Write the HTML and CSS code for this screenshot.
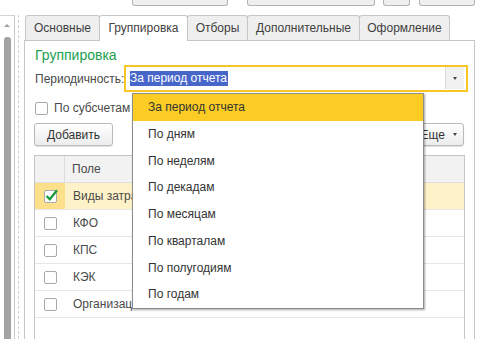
FILE: index.html
```html
<!DOCTYPE html>
<html lang="ru">
<head>
    <meta charset="UTF-8">
    <title>Группировка</title>
    <link rel="stylesheet" href="styles.css">
</head>
<body>
    <div class="sidebar">
        <span class="scroll-up"></span>
        <div class="scroll-thumb"></div>
    </div>
    <div class="splitter"><div class="splitter-line"></div></div>
    <div class="main">
        <div class="toolbar">
            <div class="tb-btn tb-1"></div>
            <div class="tb-btn tb-2"></div>
            <div class="tb-btn tb-3"></div>
            <div class="tb-btn tb-4"></div>
        </div>
        <div class="tabs">
            <div class="tab tab-main">Основные</div>
            <div class="tab tab-group active">Группировка</div>
            <div class="tab tab-filter">Отборы</div>
            <div class="tab tab-extra">Дополнительные</div>
            <div class="tab tab-look">Оформление</div>
        </div>
        <div class="panel">
            <div class="group-title">Группировка</div>
            <div class="field-row">
                <span class="field-label">Периодичность:</span>
                <div class="combo">
                    <div class="combo-text"><span class="selection">За период отчета</span></div>
                    <div class="combo-btn"><span class="arrow"></span></div>
                </div>
            </div>
            <label class="check-row">
                <span class="checkbox"></span>
                <span>По субсчетам</span>
            </label>
            <div class="btn-row">
                <button class="btn">Добавить</button>
                <button class="btn btn-more">Еще <span class="arrow"></span></button>
            </div>
            <div class="table">
                <div class="row head">
                    <div class="cell-check"></div>
                    <div class="cell-field">Поле</div>
                </div>
                <div class="row current">
                    <div class="cell-check">
                        <span class="checkbox">
                            <svg width="15" height="15" viewBox="0 0 15 15"><path d="M2.5 8 L5.8 11.2 L13 2.2" fill="none" stroke="#1c9b3b" stroke-width="2.3"/></svg>
                        </span>
                    </div>
                    <div class="cell-field">Виды затрат</div>
                </div>
                <div class="row">
                    <div class="cell-check"><span class="checkbox"></span></div>
                    <div class="cell-field">КФО</div>
                </div>
                <div class="row">
                    <div class="cell-check"><span class="checkbox"></span></div>
                    <div class="cell-field">КПС</div>
                </div>
                <div class="row">
                    <div class="cell-check"><span class="checkbox"></span></div>
                    <div class="cell-field">КЭК</div>
                </div>
                <div class="row">
                    <div class="cell-check"><span class="checkbox"></span></div>
                    <div class="cell-field">Организация</div>
                </div>
            </div>
        </div>
    </div>
    <!-- open list of the periodicity field -->
    <ul class="popup">
        <li class="hover">За период отчета</li>
        <li>По дням</li>
        <li>По неделям</li>
        <li>По декадам</li>
        <li>По месяцам</li>
        <li>По кварталам</li>
        <li>По полугодиям</li>
        <li>По годам</li>
    </ul>
</body>
</html>
```

FILE: styles.css
```css
* {
    box-sizing: border-box;
}
body {
    margin: 0;
    width: 491px;
    height: 339px;
    overflow: hidden;
    display: flex;
    background: #fff;
    font-family: "Liberation Sans", Arial, sans-serif;
    font-size: 12px;
    color: #4a4a4a;
}
.sidebar {
    width: 15px;
    margin-top: 15px;
    border-top: 1px solid #d4d4d4;
    border-right: 1px solid #c8c8c8;
    display: flex;
    flex-direction: column;
    align-items: center;
}
.scroll-up {
    margin-top: 8px;
    width: 0;
    height: 0;
    border-left: 3px solid transparent;
    border-right: 3px solid transparent;
    border-bottom: 3px solid #a0a0a0;
}
.scroll-thumb {
    flex: 1;
    width: 7px;
    margin-top: 10px;
    background: #a3a3a3;
    border-radius: 3px 3px 0 0;
}
.splitter {
    width: 9px;
    margin-top: 15px;
}
.splitter-line {
    height: 100%;
    margin-left: 3px;
    border-left: 1px dashed #d0d0d0;
}
.main {
    width: 467px;
    display: flex;
    flex-direction: column;
}
.toolbar {
    height: 15px;
    display: flex;
    align-items: flex-start;
    padding-left: 108px;
}
.tb-btn {
    height: 6px;
    border: 1px solid #b4b4b4;
    border-top: none;
    border-radius: 0 0 3px 3px;
    background: #efefef;
}
.tb-1 { width: 96px; }
.tb-2 { width: 128px; margin-left: 19px; }
.tb-3 { width: 27px; margin-left: 8px; }
.tb-4 { width: 56px; margin-left: 9px; }
.tabs {
    display: flex;
    height: 25px;
    padding-left: 1px;
    position: relative;
    z-index: 1;
}
.tab {
    height: 25px;
    line-height: 24px;
    text-align: center;
    border: 1px solid #c6c6c6;
    border-bottom: none;
    border-radius: 3px 3px 0 0;
    background: #efefef;
    margin-right: -1px;
    color: #404040;
}
.tab.active {
    background: #fff;
    height: 26px;
}
.tab-main { width: 75px; }
.tab-group { width: 89px; }
.tab-filter { width: 61px; }
.tab-extra { width: 113px; }
.tab-look { width: 91px; }
.panel {
    flex: 1;
    width: 451px;
    border: 1px solid #c6c6c6;
    border-bottom: none;
    padding: 4px 6px 0 9px;
    display: flex;
    flex-direction: column;
}
.group-title {
    color: #22a050;
    font-size: 14px;
    line-height: 20px;
    padding-left: 1px;
}
.field-row {
    display: flex;
    align-items: center;
    height: 27px;
}
.field-label {
    width: 90px;
    padding-left: 1px;
}
.combo {
    flex: 1;
    height: 27px;
    border: 2px solid #f7c524;
    display: flex;
    align-items: center;
    background: #fff;
}
.combo-text {
    flex: 1;
    padding-left: 4px;
}
.selection {
    background: #4766c9;
    color: #fff;
    line-height: 15px;
    display: inline-block;
    padding: 0 1px 0 0;
}
.combo-btn {
    width: 19px;
    height: 22px;
    margin: 0 2px 1px 0;
    align-self: flex-end;
    background: #f1f1f1;
    border-left: 1px solid #dadada;
    display: flex;
    align-items: center;
    justify-content: center;
}
.arrow {
    display: inline-block;
    width: 0;
    height: 0;
    border-left: 2.5px solid transparent;
    border-right: 2.5px solid transparent;
    border-top: 3px solid #444;
}
.check-row {
    display: flex;
    align-items: center;
    gap: 6px;
    height: 14px;
    margin-top: 9px;
    padding-left: 1px;
}
.checkbox {
    position: relative;
    width: 13px;
    height: 13px;
    border: 1px solid #a9a9a9;
    border-radius: 2px;
    background: #fff;
    display: inline-flex;
    align-items: center;
    justify-content: center;
}
.checkbox svg {
    position: absolute;
    left: -1px;
    top: -3px;
}
.btn-row {
    display: flex;
    justify-content: space-between;
    margin-top: 8px;
    margin-right: 4px;
}
.btn {
    height: 23px;
    padding: 0 12px;
    font-family: inherit;
    font-size: 12px;
    color: #333;
    border: 1px solid #b9b9b9;
    border-radius: 3px;
    background: linear-gradient(#ffffff, #ececec);
    box-shadow: 0 1px 1px rgba(0, 0, 0, 0.12);
}
.btn-more {
    padding: 0 6px 0 10px;
    display: flex;
    align-items: center;
    gap: 8px;
}
.table {
    flex: 1;
    margin-top: 9px;
    margin-right: 3px;
    border: 1px solid #c4c4c4;
    border-bottom: none;
}
.row {
    display: flex;
    height: 27px;
    border-bottom: 1px solid #e6e6e6;
}
.row.head {
    height: 27px;
    background: #f2f2f2;
    border-bottom: 1px solid #dedede;
}
.cell-check {
    width: 30px;
    display: flex;
    align-items: center;
    justify-content: center;
}
.head .cell-check {
    border-right: 1px solid #dcdcdc;
}
.cell-field {
    flex: 1;
    display: flex;
    align-items: center;
    padding-left: 8px;
    white-space: nowrap;
}
.head .cell-field {
    padding-left: 7px;
}
.current .cell-check {
    background: #fde08c;
}
.current .cell-field {
    background: #fef3c8;
}
.popup {
    position: absolute;
    left: 132px;
    top: 93px;
    width: 292px;
    margin: 0;
    padding: 0;
    list-style: none;
    background: #fff;
    border: 1px solid #8c8c8c;
    box-shadow: 1px 1px 2px rgba(0, 0, 0, 0.35);
    color: #333;
    z-index: 5;
}
.popup li {
    height: 26.75px;
    line-height: 26.75px;
    padding-left: 15px;
}
.popup li.hover {
    background: #fbcd24;
}
```
